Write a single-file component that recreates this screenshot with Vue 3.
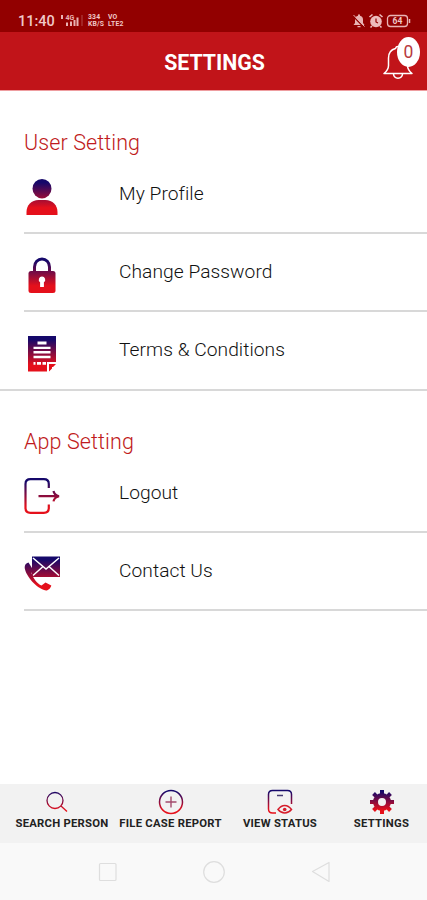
<template>
    <div class="screen">
        <svg class="defs" width="0" height="0">
            <defs>
                <linearGradient id="rowFill" gradientUnits="userSpaceOnUse" x1="0" y1="0" x2="0" y2="36">
                    <stop offset="0.1" stop-color="#15086a" />
                    <stop offset="0.8" stop-color="#e5101b" />
                </linearGradient>
                <linearGradient id="tabFill" gradientUnits="userSpaceOnUse" x1="0" y1="0" x2="0" y2="26">
                    <stop offset="0.1" stop-color="#15086a" />
                    <stop offset="0.8" stop-color="#e5101b" />
                </linearGradient>
            </defs>
        </svg>

        <div class="status-bar">
            <span class="clock">11:40</span>
            <svg class="signal" width="24" height="14" viewBox="0 0 24 14" fill="#e9b3b3">
                <path d="M1 1h2v4H1zM6 8.500h2v3.500H6zM10 7.500h2v4.500h-2zM13.500 6h2v6h-2zM16.500 3.500h2v8.500h-2z" />
                <path d="M21.500 1h1v11h-1z" opacity="0.4" />
                <text x="5.500" y="5.800" font-size="7" font-weight="700">4G</text>
            </svg>
            <span class="tiny speed">334<br>KB/S</span>
            <span class="tiny">VO<br>LTE2</span>
            <svg class="status-icons" width="60" height="16" viewBox="0 0 60 16">
                <path d="M1.500 12h11l-1.500-2V6.500A4 4 0 0 0 8 2.800V1.500H6v1.300a4 4 0 0 0-3 3.700V10zM5.500 13h3v1.200h-3z" fill="#e9b3b3" />
                <path d="M1 3l11 11.500" stroke="#920000" stroke-width="1.200" />
                <path d="M1.500 2l11 11.500" stroke="#e9b3b3" />
                <circle cx="24" cy="8.500" r="5.800" fill="#edbcbc" />
                <path d="M17.500 4l3-2.500M30.500 4l-3-2.500M20 13l-1.500 1.500M28 13l1.500 1.500" stroke="#edbcbc" stroke-width="1.600" />
                <path d="M24 5.500V9l2 1" fill="none" stroke="#920000" stroke-width="1.200" />
                <rect x="35.500" y="2.500" width="20" height="11" rx="3" fill="none" stroke="#e9b3b3" stroke-width="1.300" />
                <path d="M57.500 6v4" stroke="#e9b3b3" stroke-width="1.500" />
                <text x="45.500" y="11.200" text-anchor="middle" font-size="8.500" font-weight="700" fill="#f0c8c8">64</text>
            </svg>
        </div>

        <header class="header">
            <h1 class="title">SETTINGS</h1>
            <div class="bell">
                <svg width="32" height="40" viewBox="0 0 32 40" fill="none" stroke="#fff" stroke-width="1.500">
                    <path d="M2 33.500h28c-3-2.500-4.500-4-4.500-8V18c0-5-3-8.500-7-9.500a2.600 2.600 0 0 0-5 0c-4 1-7 4.500-7 9.500v7.500c0 4-1.500 5.500-4.500 8z" stroke-linejoin="round" />
                    <path d="M11.500 34c.5 5.500 8.500 5.500 9 0" />
                </svg>
                <span class="badge">0</span>
            </div>
        </header>

        <main class="content">
            <section v-for="section in sections" :key="section.title" class="section">
                <h2 class="section-title">{{ section.title }}</h2>
                <div class="rows">
                    <div v-for="item in section.items" :key="item.label" class="row" :class="{ full: item.full }">
                        <svg class="row-icon" width="38" height="36" viewBox="0 0 38 36">
                            <g v-if="item.icon === 'profile'" fill="url(#rowFill)">
                                <ellipse cx="18" cy="9.700" rx="9.500" ry="9.700" />
                                <path d="M2.500 36v-3c0-7 5-12 12-12h7c7 0 12 5 12 12v3z" />
                            </g>
                            <g v-else-if="item.icon === 'lock'">
                                <path d="M10.500 15V10a7.500 8 0 0 1 15 0v5" fill="none" stroke="url(#rowFill)" stroke-width="3" />
                                <rect x="4.500" y="14" width="27" height="22" rx="2.500" fill="url(#rowFill)" />
                                <path d="M18 19.500a3.200 3.200 0 0 1 1.900 5.800V30h-3.800v-4.700A3.200 3.200 0 0 1 18 19.500z" fill="#fff" />
                            </g>
                            <g v-else-if="item.icon === 'terms'">
                                <path d="M4 0h28v26h-9v9.500H4z" fill="url(#rowFill)" />
                                <path d="M13.500 5.500h9v3h-9zM9.500 10.700h17v2.300h-17zM9.500 15h17v2.500h-17zM9.500 19.800h17v2.500h-17zM9.500 26h2v2.700h-2zM13 26h4v2.700h-4zM18.500 26h3.500v2.700h-3.500z" fill="#fff" />
                                <path d="M25 28h7l-3 3h-1v1.500l-3 3z" fill="#e5101b" />
                            </g>
                            <g v-else-if="item.icon === 'logout'" fill="none" stroke="url(#rowFill)" stroke-width="2.200">
                                <path d="M24.800 10V6c0-3-2-4.800-5-4.800H6.500c-3 0-5 1.800-5 4.800v24c0 3 2 4.800 5 4.800h13.300c3 0 5-1.800 5-4.800v-3.500" />
                                <path d="M14.500 18.200h20M29.500 13c.5 3 2.500 4.500 5.500 5.200-3 .7-5 2.200-5.500 5.200" />
                            </g>
                            <g v-else>
                                <path d="M8 0.500h28v20.500H8z" fill="url(#rowFill)" />
                                <path d="M9 2l13 11L35 2M9 19.500l9.500-8.500M35 19.500L25.500 11" fill="none" stroke="#fff" stroke-width="1.500" />
                                <path d="M4.500 6.500C2 7 .5 9 .7 12 2 20 12 32.500 22 34.500c2.500 0 4.700-2.500 5.300-5l-5.800-3-4 3C13 27.500 9.500 23 7.500 17l2-2.500z" fill="url(#rowFill)" />
                            </g>
                        </svg>
                        <span class="row-label">{{ item.label }}</span>
                    </div>
                </div>
            </section>
        </main>

        <nav class="tabs">
            <div v-for="tab in tabs" :key="tab.label" class="tab" :class="tab.icon">
                <svg width="28" height="26" viewBox="0 0 28 26" fill="none" stroke="url(#tabFill)">
                    <g v-if="tab.icon === 'search'">
                        <circle cx="12" cy="11.500" r="8" stroke-width="1.300" />
                        <path d="M18 17l6 5.500" stroke-width="1.300" />
                    </g>
                    <g v-else-if="tab.icon === 'report'">
                        <circle cx="14" cy="13" r="11.500" stroke-width="1.500" />
                        <path d="M8.500 13h11M14 7.500v11" stroke="#a34b6c" stroke-width="1.400" />
                    </g>
                    <g v-else-if="tab.icon === 'view'">
                        <path d="M10 24H6.500c-2.500 0-4-1.500-4-4V5.500C2.500 3 4 1.500 6.500 1.500h15c2.500 0 4 1.500 4 4V15" stroke-width="1.500" />
                        <path d="M11 6.500h6" stroke="#443b72" stroke-width="1.500" />
                        <path d="M12 20.500c4-5.300 9.500-5.300 13.500 0-4 4.700-9.500 4.700-13.500 0z" stroke="#d51c2a" stroke-width="1.500" />
                        <circle cx="18.700" cy="20.500" r="1.800" fill="#d51c2a" stroke="none" />
                    </g>
                    <g v-else>
                        <circle cx="14" cy="13" r="6.500" stroke-width="5" />
                        <path v-for="(tooth, i) in teeth" :key="i" :d="tooth" stroke-width="4" />
                    </g>
                </svg>
                <span class="tab-label">{{ tab.label }}</span>
            </div>
        </nav>

        <div class="system-nav">
            <svg width="234" height="24" viewBox="0 0 234 24" fill="none" stroke="#dedede" stroke-width="1.200">
                <rect x="2.500" y="3.500" width="16.500" height="17" rx="1" />
                <circle cx="117" cy="12" r="10.300" />
                <path d="M215.500 11.500L232 2.500v19z" stroke-linejoin="round" />
            </svg>
        </div>
    </div>
</template>

<script setup>
const sections = [
    {
        title: 'User Setting',
        items: [
            { label: 'My Profile', icon: 'profile' },
            { label: 'Change Password', icon: 'lock' },
            { label: 'Terms & Conditions', icon: 'terms', full: true }
        ]
    },
    {
        title: 'App Setting',
        items: [
            { label: 'Logout', icon: 'logout' },
            { label: 'Contact Us', icon: 'contact' }
        ]
    }
]

const tabs = [
    { label: 'SEARCH PERSON', icon: 'search' },
    { label: 'FILE CASE REPORT', icon: 'report' },
    { label: 'VIEW STATUS', icon: 'view' },
    { label: 'SETTINGS', icon: 'settings' }
]

// eight short spokes around the gear's centre
const teeth = Array.from({ length: 8 }, (_, i) => {
    const angle = (i * Math.PI) / 4
    const x = Math.cos(angle)
    const y = Math.sin(angle)
    return `M${14 + x * 7} ${13 + y * 7}L${14 + x * 12} ${13 + y * 12}`
})
</script>

<style>
body {
    background-color: #fff;
}
</style>

<style scoped>
.screen {
    display: flex;
    flex-direction: column;
    width: 427px;
    height: 900px;
    overflow: hidden;
    background-color: #fff;
    font-family: Roboto, "Liberation Sans", sans-serif;
}

.defs {
    display: block;
}

.status-bar {
    display: flex;
    align-items: center;
    flex: none;
    box-sizing: border-box;
    height: 32px;
    padding: 10px 15px 0 18px;
    background-color: #920000;
    color: #f0c8c8;
}

.clock {
    width: 42px;
    font-size: 14.5px;
    font-weight: 500;
}

.tiny {
    font-size: 6.8px;
    font-weight: 700;
    line-height: 7px;
    letter-spacing: 0.2px;
}

.speed {
    width: 20px;
    margin-left: 4px;
}

.status-icons {
    margin-left: auto;
}

.header {
    position: relative;
    display: flex;
    align-items: center;
    justify-content: center;
    flex: none;
    box-sizing: border-box;
    height: 59px;
    border-bottom: 1px solid #ee9da0;
    background-color: #c11419;
    color: #fff;
}

.title {
    margin: 2px 0 0 2px;
    font-size: 21.3px;
    font-weight: 700;
}

.bell {
    position: absolute;
    top: 8px;
    right: 13px;
    width: 32px;
    height: 40px;
}

.badge {
    position: absolute;
    top: -3px;
    left: 15px;
    width: 23px;
    height: 30px;
    border-radius: 50%;
    background-color: #fff;
    color: #b73a40;
    font-size: 17.5px;
    font-weight: 400;
    line-height: 31px;
    text-align: center;
}

.content {
    flex: 1;
    padding-top: 38px;
}

.section {
    height: 299px;
}

.section-title {
    height: 28px;
    margin: 0 0 0 24px;
    color: #c01a20;
    font-size: 21.5px;
    font-weight: 300;
    line-height: 28px;
    letter-spacing: 0.1px;
}

.row {
    display: flex;
    box-sizing: border-box;
    height: 78px;
    margin-left: 24px;
    padding-top: 23px;
    border-bottom: 2px solid #d8d8d8;
}

.row:first-child {
    height: 77px;
    padding-top: 22px;
}

.row.full {
    height: 79px;
    margin-left: 0;
    padding-top: 24px;
    padding-left: 24px;
}

.row-icon {
    flex: none;
    width: 38px;
    margin-right: 57px;
}

.row-label {
    height: 26px;
    margin-top: 1px;
    color: #111;
    font-size: 19.2px;
    font-weight: 300;
    line-height: 27px;
    letter-spacing: 0.05px;
}

.row.full .row-label {
    margin-top: 0;
}

.tabs {
    display: flex;
    flex: none;
    box-sizing: border-box;
    height: 59px;
    padding: 5px 0 0 10px;
    background-color: #f2f2f2;
}

.tab {
    display: flex;
    flex: none;
    flex-direction: column;
    align-items: center;
    width: 104px;
}

.tab.report {
    width: 113px;
}

.tab.view {
    width: 106px;
}

.tab.settings {
    width: 97px;
}

.tab.search svg {
    margin-right: 11px;
}

.tab-label {
    color: #222;
    font-size: 11.3px;
    font-weight: 700;
    line-height: 17px;
    letter-spacing: 0.25px;
    white-space: nowrap;
}

.system-nav {
    display: flex;
    align-items: center;
    justify-content: center;
    flex: none;
    height: 57px;
    background-color: #f9f9f9;
}
</style>
